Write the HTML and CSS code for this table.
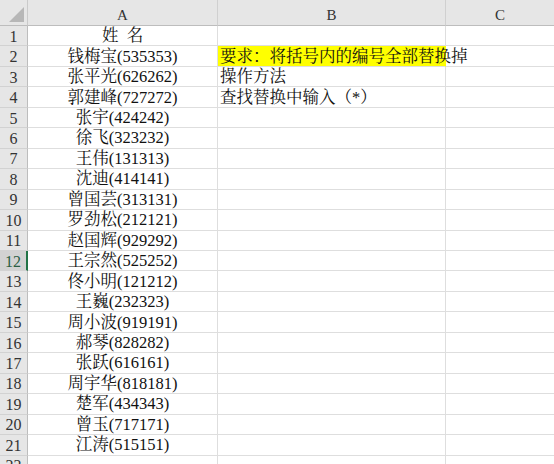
FILE: index.html
```html
<!DOCTYPE html>
<html lang="zh">
<head>
<meta charset="utf-8">
<title>Sheet</title>
<link rel="stylesheet" href="styles.css">
</head>
<body>
<div class="sheet">
  <div class="corner"><span class="tri"></span></div>
  <div class="colhead">A</div>
  <div class="colhead">B</div>
  <div class="colhead last">C</div>

  <div class="rowhead">1</div><div class="cell a">姓&nbsp;&nbsp;名</div><div class="cell b"></div><div class="cell c"></div>
  <div class="rowhead">2</div><div class="cell a">钱梅宝(535353)</div><div class="cell b hl">要求：将括号内的编号全部替换掉</div><div class="cell c"></div>
  <div class="rowhead">3</div><div class="cell a">张平光(626262)</div><div class="cell b">操作方法</div><div class="cell c"></div>
  <div class="rowhead">4</div><div class="cell a">郭建峰(727272)</div><div class="cell b">查找替换中输入（*）</div><div class="cell c"></div>
  <div class="rowhead">5</div><div class="cell a">张宇(424242)</div><div class="cell b"></div><div class="cell c"></div>
  <div class="rowhead">6</div><div class="cell a">徐飞(323232)</div><div class="cell b"></div><div class="cell c"></div>
  <div class="rowhead">7</div><div class="cell a">王伟(131313)</div><div class="cell b"></div><div class="cell c"></div>
  <div class="rowhead">8</div><div class="cell a">沈迪(414141)</div><div class="cell b"></div><div class="cell c"></div>
  <div class="rowhead">9</div><div class="cell a">曾国芸(313131)</div><div class="cell b"></div><div class="cell c"></div>
  <div class="rowhead">10</div><div class="cell a">罗劲松(212121)</div><div class="cell b"></div><div class="cell c"></div>
  <div class="rowhead">11</div><div class="cell a">赵国辉(929292)</div><div class="cell b"></div><div class="cell c"></div>
  <div class="rowhead sel">12</div><div class="cell a">王宗然(525252)</div><div class="cell b"></div><div class="cell c"></div>
  <div class="rowhead">13</div><div class="cell a">佟小明(121212)</div><div class="cell b"></div><div class="cell c"></div>
  <div class="rowhead">14</div><div class="cell a">王巍(232323)</div><div class="cell b"></div><div class="cell c"></div>
  <div class="rowhead">15</div><div class="cell a">周小波(919191)</div><div class="cell b"></div><div class="cell c"></div>
  <div class="rowhead">16</div><div class="cell a">郝琴(828282)</div><div class="cell b"></div><div class="cell c"></div>
  <div class="rowhead">17</div><div class="cell a">张跃(616161)</div><div class="cell b"></div><div class="cell c"></div>
  <div class="rowhead">18</div><div class="cell a">周宇华(818181)</div><div class="cell b"></div><div class="cell c"></div>
  <div class="rowhead">19</div><div class="cell a">楚军(434343)</div><div class="cell b"></div><div class="cell c"></div>
  <div class="rowhead">20</div><div class="cell a">曾玉(717171)</div><div class="cell b"></div><div class="cell c"></div>
  <div class="rowhead">21</div><div class="cell a">江涛(515151)</div><div class="cell b"></div><div class="cell c"></div>
  <div class="rowhead">22</div><div class="cell a"></div><div class="cell b"></div><div class="cell c"></div>
</div>
</body>
</html>
```
FILE: styles.css
```css
html, body {
  margin: 0;
  padding: 0;
  background: #ffffff;
  overflow: hidden;
}

.sheet {
  display: grid;
  grid-template-columns: 28px 190px 228px 108px;
  grid-template-rows: 26px repeat(22, 20.46px);
  width: 554px;
  font-family: "Liberation Serif", "Noto Serif CJK SC", "Noto Sans CJK SC", serif;
  color: #111;
}

.corner {
  background: #e6e6e6;
  border-right: 1px solid #cacaca;
  border-bottom: 1px solid #bdbdbd;
  box-sizing: border-box;
  position: relative;
}

.tri {
  position: absolute;
  right: 3px;
  bottom: 3px;
  width: 0;
  height: 0;
  border-style: solid;
  border-width: 0 0 15px 15px;
  border-color: transparent transparent #b7b7b7 transparent;
}

.colhead {
  background: #e6e6e6;
  border-right: 1px solid #d0d0d0;
  border-bottom: 1px solid #bdbdbd;
  box-sizing: border-box;
  display: flex;
  align-items: flex-end;
  justify-content: center;
  padding-bottom: 2px;
  font-size: 15px;
  color: #333;
  line-height: 16px;
}

.colhead.last {
  border-right: none;
}

.rowhead {
  background: #e6e6e6;
  border-right: 1px solid #bdbdbd;
  border-bottom: 1px solid #d2d2d2;
  box-sizing: border-box;
  display: flex;
  align-items: center;
  justify-content: center;
  padding-top: 2px;
  font-size: 16px;
  color: #333;
  line-height: 16px;
}

.rowhead.sel {
  background: #d2d2d2;
  border-right: 2px solid #217346;
  color: #2a5e43;
}

.cell {
  border-right: 1px solid #dedede;
  border-bottom: 1px solid #dedede;
  box-sizing: border-box;
  display: flex;
  align-items: center;
  white-space: nowrap;
  font-size: 16.5px;
  line-height: 18px;
  padding-top: 1px;
}

.cell.a {
  justify-content: center;
}

.cell.b {
  padding-left: 2px;
}

.cell.hl {
  background: #ffff00;
  border-right-color: #ffff00;
  overflow: visible;
}

.cell.c {
  border-right: none;
}
```
